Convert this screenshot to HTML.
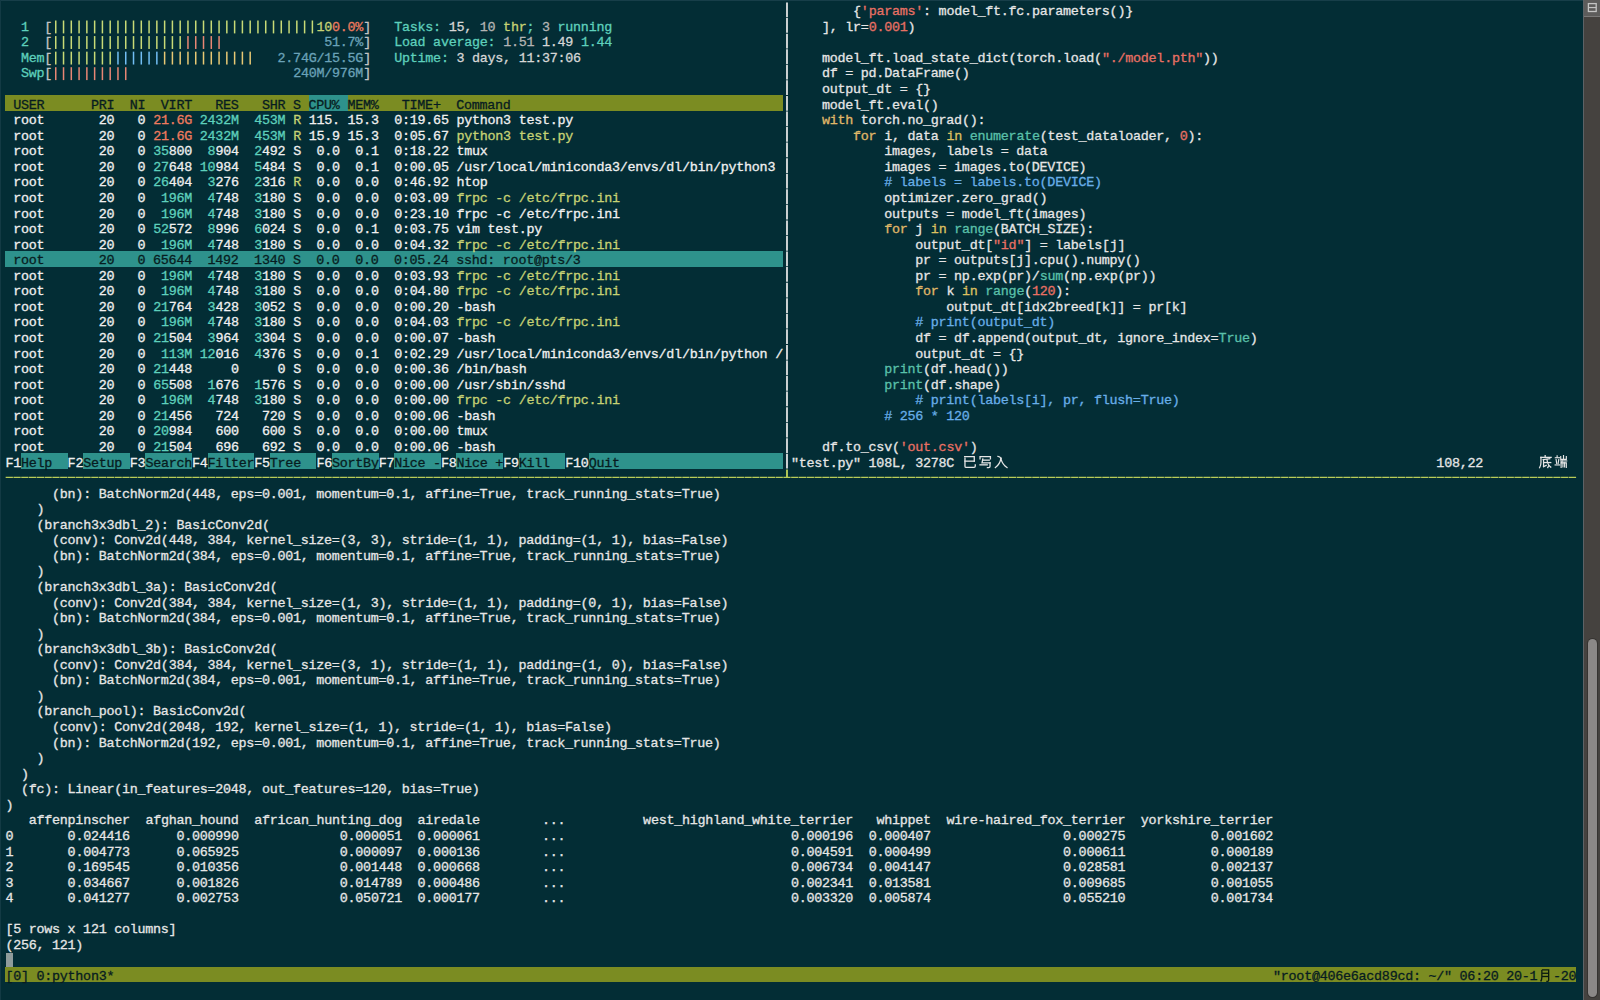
<!DOCTYPE html><html><head><meta charset="utf-8"><style>
html,body{margin:0;padding:0;width:1600px;height:1000px;overflow:hidden;background:#032d35;}
#t{position:absolute;left:0;top:0;width:1600px;height:1000px;}
.r{position:absolute;white-space:pre;font-family:"Liberation Mono",monospace;font-size:13.400px;line-height:15.562px;height:15.562px;-webkit-text-stroke:0.3px currentColor;letter-spacing:-0.263px;}
.b{position:absolute;}
</style></head><body><div id="t">
<div class="b" style="left:5.40px;top:95.42px;width:777.70px;height:15.56px;background:#7b8c22"></div>
<div class="b" style="left:308.70px;top:95.42px;width:38.88px;height:15.56px;background:#2e928c"></div>
<div class="b" style="left:5.40px;top:251.04px;width:777.70px;height:15.56px;background:#2e928c"></div>
<div class="b" style="left:20.95px;top:453.35px;width:46.66px;height:15.56px;background:#2e928c"></div>
<div class="b" style="left:83.17px;top:453.35px;width:46.66px;height:15.56px;background:#2e928c"></div>
<div class="b" style="left:145.39px;top:453.35px;width:46.66px;height:15.56px;background:#2e928c"></div>
<div class="b" style="left:207.60px;top:453.35px;width:46.66px;height:15.56px;background:#2e928c"></div>
<div class="b" style="left:269.82px;top:453.35px;width:46.66px;height:15.56px;background:#2e928c"></div>
<div class="b" style="left:332.03px;top:453.35px;width:46.66px;height:15.56px;background:#2e928c"></div>
<div class="b" style="left:394.25px;top:453.35px;width:46.66px;height:15.56px;background:#2e928c"></div>
<div class="b" style="left:456.47px;top:453.35px;width:46.66px;height:15.56px;background:#2e928c"></div>
<div class="b" style="left:518.68px;top:453.35px;width:46.66px;height:15.56px;background:#2e928c"></div>
<div class="b" style="left:588.67px;top:453.35px;width:194.43px;height:15.56px;background:#2e928c"></div>
<div class="b" style="left:5.40px;top:966.89px;width:1570.95px;height:15.56px;background:#7b8c22"></div>
<div class="b" style="left:5.60px;top:952.73px;width:7.58px;height:13.96px;background:#8f9c9c"></div>
<div class="b" style="left:0.00px;top:0.00px;width:1600.00px;height:1.00px;background:#173e49"></div>
<div class="b" style="left:0.00px;top:0.00px;width:1.00px;height:1000.00px;background:#133a44"></div>
<div class="b" style="left:1583.00px;top:0.00px;width:17.00px;height:1000.00px;background:#45423f"></div>
<div class="b" style="left:1583.00px;top:0.00px;width:1.00px;height:1000.00px;background:#5c6266"></div>
<div class="b" style="left:1584.00px;top:0.00px;width:16.00px;height:16.00px;background:#5d5c5b"></div>
<div class="b" style="left:1584.00px;top:15.50px;width:16.00px;height:1.00px;background:#7a7978"></div>
<div class="r" style="left:20.95px;top:19.77px;color:#5ed0bc">1</div>
<div class="r" style="left:44.28px;top:19.77px;color:#c4c4c4">[</div>
<div class="r" style="left:316.48px;top:19.77px;color:#c6d274">10</div>
<div class="r" style="left:332.03px;top:19.77px;color:#ee7a5e">0.0%</div>
<div class="r" style="left:363.14px;top:19.77px;color:#c4c4c4">]</div>
<div class="r" style="left:20.95px;top:35.33px;color:#5ed0bc">2</div>
<div class="r" style="left:44.28px;top:35.33px;color:#c4c4c4">[</div>
<div class="r" style="left:324.26px;top:35.33px;color:#6aa2b8">51.7%</div>
<div class="r" style="left:363.14px;top:35.33px;color:#c4c4c4">]</div>
<div class="r" style="left:20.95px;top:50.89px;color:#5ed0bc">Mem</div>
<div class="r" style="left:44.28px;top:50.89px;color:#c4c4c4">[</div>
<div class="r" style="left:277.59px;top:50.89px;color:#6aa2b8">2.74G/15.5G</div>
<div class="r" style="left:363.14px;top:50.89px;color:#c4c4c4">]</div>
<div class="r" style="left:20.95px;top:66.45px;color:#5ed0bc">Swp</div>
<div class="r" style="left:44.28px;top:66.45px;color:#c4c4c4">[</div>
<div class="r" style="left:293.15px;top:66.45px;color:#6aa2b8">240M/976M</div>
<div class="r" style="left:363.14px;top:66.45px;color:#c4c4c4">]</div>
<div class="r" style="left:394.25px;top:19.77px;color:#5ed0bc">Tasks: </div>
<div class="r" style="left:448.69px;top:19.77px;color:#d6d6d6">15, </div>
<div class="r" style="left:479.80px;top:19.77px;color:#b4b4b4">10</div>
<div class="r" style="left:495.35px;top:19.77px;color:#c6d274"> thr</div>
<div class="r" style="left:526.46px;top:19.77px;color:#5ed0bc">; </div>
<div class="r" style="left:542.01px;top:19.77px;color:#b4b4b4">3</div>
<div class="r" style="left:549.79px;top:19.77px;color:#5ed0bc"> running</div>
<div class="r" style="left:394.25px;top:35.33px;color:#5ed0bc">Load average: </div>
<div class="r" style="left:503.13px;top:35.33px;color:#b4b4b4">1.51 </div>
<div class="r" style="left:542.01px;top:35.33px;color:#d6d6d6">1.49 </div>
<div class="r" style="left:580.90px;top:35.33px;color:#5ed0bc">1.44</div>
<div class="r" style="left:394.25px;top:50.89px;color:#5ed0bc">Uptime: </div>
<div class="r" style="left:456.47px;top:50.89px;color:#d6d6d6">3 days, 11:37:06</div>
<div class="r" style="left:5.40px;top:97.58px;color:#071c20"> USER      PRI  NI  VIRT   RES   SHR S CPU% MEM%   TIME+  Command</div>
<div class="r" style="left:13.18px;top:113.14px;color:#f0f0f0">root</div>
<div class="r" style="left:98.72px;top:113.14px;color:#f0f0f0">20</div>
<div class="r" style="left:137.61px;top:113.14px;color:#f0f0f0">0</div>
<div class="r" style="left:153.16px;top:113.14px;color:#ee7a5e">21.6G</div>
<div class="r" style="left:199.83px;top:113.14px;color:#5ed0bc">2432M</div>
<div class="r" style="left:254.26px;top:113.14px;color:#5ed0bc">453M</div>
<div class="r" style="left:293.15px;top:113.14px;color:#c6d274">R</div>
<div class="r" style="left:308.70px;top:113.14px;color:#f0f0f0">115.</div>
<div class="r" style="left:347.59px;top:113.14px;color:#f0f0f0">15.3</div>
<div class="r" style="left:394.25px;top:113.14px;color:#f0f0f0">0:19.65</div>
<div class="r" style="left:456.47px;top:113.14px;color:#f0f0f0">python3 test.py</div>
<div class="r" style="left:13.18px;top:128.70px;color:#f0f0f0">root</div>
<div class="r" style="left:98.72px;top:128.70px;color:#f0f0f0">20</div>
<div class="r" style="left:137.61px;top:128.70px;color:#f0f0f0">0</div>
<div class="r" style="left:153.16px;top:128.70px;color:#ee7a5e">21.6G</div>
<div class="r" style="left:199.83px;top:128.70px;color:#5ed0bc">2432M</div>
<div class="r" style="left:254.26px;top:128.70px;color:#5ed0bc">453M</div>
<div class="r" style="left:293.15px;top:128.70px;color:#c6d274">R</div>
<div class="r" style="left:308.70px;top:128.70px;color:#f0f0f0">15.9</div>
<div class="r" style="left:347.59px;top:128.70px;color:#f0f0f0">15.3</div>
<div class="r" style="left:394.25px;top:128.70px;color:#f0f0f0">0:05.67</div>
<div class="r" style="left:456.47px;top:128.70px;color:#c6d274">python3 test.py</div>
<div class="r" style="left:13.18px;top:144.26px;color:#f0f0f0">root</div>
<div class="r" style="left:98.72px;top:144.26px;color:#f0f0f0">20</div>
<div class="r" style="left:137.61px;top:144.26px;color:#f0f0f0">0</div>
<div class="r" style="left:153.16px;top:144.26px;color:#5ed0bc">35</div>
<div class="r" style="left:168.72px;top:144.26px;color:#f0f0f0">800</div>
<div class="r" style="left:207.60px;top:144.26px;color:#5ed0bc">8</div>
<div class="r" style="left:215.38px;top:144.26px;color:#f0f0f0">904</div>
<div class="r" style="left:254.26px;top:144.26px;color:#5ed0bc">2</div>
<div class="r" style="left:262.04px;top:144.26px;color:#f0f0f0">492</div>
<div class="r" style="left:293.15px;top:144.26px;color:#f0f0f0">S</div>
<div class="r" style="left:316.48px;top:144.26px;color:#f0f0f0">0.0</div>
<div class="r" style="left:355.37px;top:144.26px;color:#f0f0f0">0.1</div>
<div class="r" style="left:394.25px;top:144.26px;color:#f0f0f0">0:18.22</div>
<div class="r" style="left:456.47px;top:144.26px;color:#f0f0f0">tmux</div>
<div class="r" style="left:13.18px;top:159.82px;color:#f0f0f0">root</div>
<div class="r" style="left:98.72px;top:159.82px;color:#f0f0f0">20</div>
<div class="r" style="left:137.61px;top:159.82px;color:#f0f0f0">0</div>
<div class="r" style="left:153.16px;top:159.82px;color:#5ed0bc">27</div>
<div class="r" style="left:168.72px;top:159.82px;color:#f0f0f0">648</div>
<div class="r" style="left:199.83px;top:159.82px;color:#5ed0bc">10</div>
<div class="r" style="left:215.38px;top:159.82px;color:#f0f0f0">984</div>
<div class="r" style="left:254.26px;top:159.82px;color:#5ed0bc">5</div>
<div class="r" style="left:262.04px;top:159.82px;color:#f0f0f0">484</div>
<div class="r" style="left:293.15px;top:159.82px;color:#f0f0f0">S</div>
<div class="r" style="left:316.48px;top:159.82px;color:#f0f0f0">0.0</div>
<div class="r" style="left:355.37px;top:159.82px;color:#f0f0f0">0.1</div>
<div class="r" style="left:394.25px;top:159.82px;color:#f0f0f0">0:00.05</div>
<div class="r" style="left:456.47px;top:159.82px;color:#f0f0f0">/usr/local/miniconda3/envs/dl/bin/python3</div>
<div class="r" style="left:13.18px;top:175.39px;color:#f0f0f0">root</div>
<div class="r" style="left:98.72px;top:175.39px;color:#f0f0f0">20</div>
<div class="r" style="left:137.61px;top:175.39px;color:#f0f0f0">0</div>
<div class="r" style="left:153.16px;top:175.39px;color:#5ed0bc">26</div>
<div class="r" style="left:168.72px;top:175.39px;color:#f0f0f0">404</div>
<div class="r" style="left:207.60px;top:175.39px;color:#5ed0bc">3</div>
<div class="r" style="left:215.38px;top:175.39px;color:#f0f0f0">276</div>
<div class="r" style="left:254.26px;top:175.39px;color:#5ed0bc">2</div>
<div class="r" style="left:262.04px;top:175.39px;color:#f0f0f0">316</div>
<div class="r" style="left:293.15px;top:175.39px;color:#c6d274">R</div>
<div class="r" style="left:316.48px;top:175.39px;color:#f0f0f0">0.0</div>
<div class="r" style="left:355.37px;top:175.39px;color:#f0f0f0">0.0</div>
<div class="r" style="left:394.25px;top:175.39px;color:#f0f0f0">0:46.92</div>
<div class="r" style="left:456.47px;top:175.39px;color:#f0f0f0">htop</div>
<div class="r" style="left:13.18px;top:190.95px;color:#f0f0f0">root</div>
<div class="r" style="left:98.72px;top:190.95px;color:#f0f0f0">20</div>
<div class="r" style="left:137.61px;top:190.95px;color:#f0f0f0">0</div>
<div class="r" style="left:160.94px;top:190.95px;color:#5ed0bc">196M</div>
<div class="r" style="left:207.60px;top:190.95px;color:#5ed0bc">4</div>
<div class="r" style="left:215.38px;top:190.95px;color:#f0f0f0">748</div>
<div class="r" style="left:254.26px;top:190.95px;color:#5ed0bc">3</div>
<div class="r" style="left:262.04px;top:190.95px;color:#f0f0f0">180</div>
<div class="r" style="left:293.15px;top:190.95px;color:#f0f0f0">S</div>
<div class="r" style="left:316.48px;top:190.95px;color:#f0f0f0">0.0</div>
<div class="r" style="left:355.37px;top:190.95px;color:#f0f0f0">0.0</div>
<div class="r" style="left:394.25px;top:190.95px;color:#f0f0f0">0:03.09</div>
<div class="r" style="left:456.47px;top:190.95px;color:#c6d274">frpc -c /etc/frpc.ini</div>
<div class="r" style="left:13.18px;top:206.51px;color:#f0f0f0">root</div>
<div class="r" style="left:98.72px;top:206.51px;color:#f0f0f0">20</div>
<div class="r" style="left:137.61px;top:206.51px;color:#f0f0f0">0</div>
<div class="r" style="left:160.94px;top:206.51px;color:#5ed0bc">196M</div>
<div class="r" style="left:207.60px;top:206.51px;color:#5ed0bc">4</div>
<div class="r" style="left:215.38px;top:206.51px;color:#f0f0f0">748</div>
<div class="r" style="left:254.26px;top:206.51px;color:#5ed0bc">3</div>
<div class="r" style="left:262.04px;top:206.51px;color:#f0f0f0">180</div>
<div class="r" style="left:293.15px;top:206.51px;color:#f0f0f0">S</div>
<div class="r" style="left:316.48px;top:206.51px;color:#f0f0f0">0.0</div>
<div class="r" style="left:355.37px;top:206.51px;color:#f0f0f0">0.0</div>
<div class="r" style="left:394.25px;top:206.51px;color:#f0f0f0">0:23.10</div>
<div class="r" style="left:456.47px;top:206.51px;color:#f0f0f0">frpc -c /etc/frpc.ini</div>
<div class="r" style="left:13.18px;top:222.07px;color:#f0f0f0">root</div>
<div class="r" style="left:98.72px;top:222.07px;color:#f0f0f0">20</div>
<div class="r" style="left:137.61px;top:222.07px;color:#f0f0f0">0</div>
<div class="r" style="left:153.16px;top:222.07px;color:#5ed0bc">52</div>
<div class="r" style="left:168.72px;top:222.07px;color:#f0f0f0">572</div>
<div class="r" style="left:207.60px;top:222.07px;color:#5ed0bc">8</div>
<div class="r" style="left:215.38px;top:222.07px;color:#f0f0f0">996</div>
<div class="r" style="left:254.26px;top:222.07px;color:#5ed0bc">6</div>
<div class="r" style="left:262.04px;top:222.07px;color:#f0f0f0">024</div>
<div class="r" style="left:293.15px;top:222.07px;color:#f0f0f0">S</div>
<div class="r" style="left:316.48px;top:222.07px;color:#f0f0f0">0.0</div>
<div class="r" style="left:355.37px;top:222.07px;color:#f0f0f0">0.1</div>
<div class="r" style="left:394.25px;top:222.07px;color:#f0f0f0">0:03.75</div>
<div class="r" style="left:456.47px;top:222.07px;color:#f0f0f0">vim test.py</div>
<div class="r" style="left:13.18px;top:237.63px;color:#f0f0f0">root</div>
<div class="r" style="left:98.72px;top:237.63px;color:#f0f0f0">20</div>
<div class="r" style="left:137.61px;top:237.63px;color:#f0f0f0">0</div>
<div class="r" style="left:160.94px;top:237.63px;color:#5ed0bc">196M</div>
<div class="r" style="left:207.60px;top:237.63px;color:#5ed0bc">4</div>
<div class="r" style="left:215.38px;top:237.63px;color:#f0f0f0">748</div>
<div class="r" style="left:254.26px;top:237.63px;color:#5ed0bc">3</div>
<div class="r" style="left:262.04px;top:237.63px;color:#f0f0f0">180</div>
<div class="r" style="left:293.15px;top:237.63px;color:#f0f0f0">S</div>
<div class="r" style="left:316.48px;top:237.63px;color:#f0f0f0">0.0</div>
<div class="r" style="left:355.37px;top:237.63px;color:#f0f0f0">0.0</div>
<div class="r" style="left:394.25px;top:237.63px;color:#f0f0f0">0:04.32</div>
<div class="r" style="left:456.47px;top:237.63px;color:#c6d274">frpc -c /etc/frpc.ini</div>
<div class="r" style="left:5.40px;top:253.20px;color:#071c20"> root       20   0 65644  1492  1340 S  0.0  0.0  0:05.24 sshd: root@pts/3</div>
<div class="r" style="left:13.18px;top:268.76px;color:#f0f0f0">root</div>
<div class="r" style="left:98.72px;top:268.76px;color:#f0f0f0">20</div>
<div class="r" style="left:137.61px;top:268.76px;color:#f0f0f0">0</div>
<div class="r" style="left:160.94px;top:268.76px;color:#5ed0bc">196M</div>
<div class="r" style="left:207.60px;top:268.76px;color:#5ed0bc">4</div>
<div class="r" style="left:215.38px;top:268.76px;color:#f0f0f0">748</div>
<div class="r" style="left:254.26px;top:268.76px;color:#5ed0bc">3</div>
<div class="r" style="left:262.04px;top:268.76px;color:#f0f0f0">180</div>
<div class="r" style="left:293.15px;top:268.76px;color:#f0f0f0">S</div>
<div class="r" style="left:316.48px;top:268.76px;color:#f0f0f0">0.0</div>
<div class="r" style="left:355.37px;top:268.76px;color:#f0f0f0">0.0</div>
<div class="r" style="left:394.25px;top:268.76px;color:#f0f0f0">0:03.93</div>
<div class="r" style="left:456.47px;top:268.76px;color:#c6d274">frpc -c /etc/frpc.ini</div>
<div class="r" style="left:13.18px;top:284.32px;color:#f0f0f0">root</div>
<div class="r" style="left:98.72px;top:284.32px;color:#f0f0f0">20</div>
<div class="r" style="left:137.61px;top:284.32px;color:#f0f0f0">0</div>
<div class="r" style="left:160.94px;top:284.32px;color:#5ed0bc">196M</div>
<div class="r" style="left:207.60px;top:284.32px;color:#5ed0bc">4</div>
<div class="r" style="left:215.38px;top:284.32px;color:#f0f0f0">748</div>
<div class="r" style="left:254.26px;top:284.32px;color:#5ed0bc">3</div>
<div class="r" style="left:262.04px;top:284.32px;color:#f0f0f0">180</div>
<div class="r" style="left:293.15px;top:284.32px;color:#f0f0f0">S</div>
<div class="r" style="left:316.48px;top:284.32px;color:#f0f0f0">0.0</div>
<div class="r" style="left:355.37px;top:284.32px;color:#f0f0f0">0.0</div>
<div class="r" style="left:394.25px;top:284.32px;color:#f0f0f0">0:04.80</div>
<div class="r" style="left:456.47px;top:284.32px;color:#c6d274">frpc -c /etc/frpc.ini</div>
<div class="r" style="left:13.18px;top:299.88px;color:#f0f0f0">root</div>
<div class="r" style="left:98.72px;top:299.88px;color:#f0f0f0">20</div>
<div class="r" style="left:137.61px;top:299.88px;color:#f0f0f0">0</div>
<div class="r" style="left:153.16px;top:299.88px;color:#5ed0bc">21</div>
<div class="r" style="left:168.72px;top:299.88px;color:#f0f0f0">764</div>
<div class="r" style="left:207.60px;top:299.88px;color:#5ed0bc">3</div>
<div class="r" style="left:215.38px;top:299.88px;color:#f0f0f0">428</div>
<div class="r" style="left:254.26px;top:299.88px;color:#5ed0bc">3</div>
<div class="r" style="left:262.04px;top:299.88px;color:#f0f0f0">052</div>
<div class="r" style="left:293.15px;top:299.88px;color:#f0f0f0">S</div>
<div class="r" style="left:316.48px;top:299.88px;color:#f0f0f0">0.0</div>
<div class="r" style="left:355.37px;top:299.88px;color:#f0f0f0">0.0</div>
<div class="r" style="left:394.25px;top:299.88px;color:#f0f0f0">0:00.20</div>
<div class="r" style="left:456.47px;top:299.88px;color:#f0f0f0">-bash</div>
<div class="r" style="left:13.18px;top:315.44px;color:#f0f0f0">root</div>
<div class="r" style="left:98.72px;top:315.44px;color:#f0f0f0">20</div>
<div class="r" style="left:137.61px;top:315.44px;color:#f0f0f0">0</div>
<div class="r" style="left:160.94px;top:315.44px;color:#5ed0bc">196M</div>
<div class="r" style="left:207.60px;top:315.44px;color:#5ed0bc">4</div>
<div class="r" style="left:215.38px;top:315.44px;color:#f0f0f0">748</div>
<div class="r" style="left:254.26px;top:315.44px;color:#5ed0bc">3</div>
<div class="r" style="left:262.04px;top:315.44px;color:#f0f0f0">180</div>
<div class="r" style="left:293.15px;top:315.44px;color:#f0f0f0">S</div>
<div class="r" style="left:316.48px;top:315.44px;color:#f0f0f0">0.0</div>
<div class="r" style="left:355.37px;top:315.44px;color:#f0f0f0">0.0</div>
<div class="r" style="left:394.25px;top:315.44px;color:#f0f0f0">0:04.03</div>
<div class="r" style="left:456.47px;top:315.44px;color:#c6d274">frpc -c /etc/frpc.ini</div>
<div class="r" style="left:13.18px;top:331.01px;color:#f0f0f0">root</div>
<div class="r" style="left:98.72px;top:331.01px;color:#f0f0f0">20</div>
<div class="r" style="left:137.61px;top:331.01px;color:#f0f0f0">0</div>
<div class="r" style="left:153.16px;top:331.01px;color:#5ed0bc">21</div>
<div class="r" style="left:168.72px;top:331.01px;color:#f0f0f0">504</div>
<div class="r" style="left:207.60px;top:331.01px;color:#5ed0bc">3</div>
<div class="r" style="left:215.38px;top:331.01px;color:#f0f0f0">964</div>
<div class="r" style="left:254.26px;top:331.01px;color:#5ed0bc">3</div>
<div class="r" style="left:262.04px;top:331.01px;color:#f0f0f0">304</div>
<div class="r" style="left:293.15px;top:331.01px;color:#f0f0f0">S</div>
<div class="r" style="left:316.48px;top:331.01px;color:#f0f0f0">0.0</div>
<div class="r" style="left:355.37px;top:331.01px;color:#f0f0f0">0.0</div>
<div class="r" style="left:394.25px;top:331.01px;color:#f0f0f0">0:00.07</div>
<div class="r" style="left:456.47px;top:331.01px;color:#f0f0f0">-bash</div>
<div class="r" style="left:13.18px;top:346.57px;color:#f0f0f0">root</div>
<div class="r" style="left:98.72px;top:346.57px;color:#f0f0f0">20</div>
<div class="r" style="left:137.61px;top:346.57px;color:#f0f0f0">0</div>
<div class="r" style="left:160.94px;top:346.57px;color:#5ed0bc">113M</div>
<div class="r" style="left:199.83px;top:346.57px;color:#5ed0bc">12</div>
<div class="r" style="left:215.38px;top:346.57px;color:#f0f0f0">016</div>
<div class="r" style="left:254.26px;top:346.57px;color:#5ed0bc">4</div>
<div class="r" style="left:262.04px;top:346.57px;color:#f0f0f0">376</div>
<div class="r" style="left:293.15px;top:346.57px;color:#f0f0f0">S</div>
<div class="r" style="left:316.48px;top:346.57px;color:#f0f0f0">0.0</div>
<div class="r" style="left:355.37px;top:346.57px;color:#f0f0f0">0.1</div>
<div class="r" style="left:394.25px;top:346.57px;color:#f0f0f0">0:02.29</div>
<div class="r" style="left:456.47px;top:346.57px;color:#f0f0f0">/usr/local/miniconda3/envs/dl/bin/python /</div>
<div class="r" style="left:13.18px;top:362.13px;color:#f0f0f0">root</div>
<div class="r" style="left:98.72px;top:362.13px;color:#f0f0f0">20</div>
<div class="r" style="left:137.61px;top:362.13px;color:#f0f0f0">0</div>
<div class="r" style="left:153.16px;top:362.13px;color:#5ed0bc">21</div>
<div class="r" style="left:168.72px;top:362.13px;color:#f0f0f0">448</div>
<div class="r" style="left:230.93px;top:362.13px;color:#f0f0f0">0</div>
<div class="r" style="left:277.59px;top:362.13px;color:#f0f0f0">0</div>
<div class="r" style="left:293.15px;top:362.13px;color:#f0f0f0">S</div>
<div class="r" style="left:316.48px;top:362.13px;color:#f0f0f0">0.0</div>
<div class="r" style="left:355.37px;top:362.13px;color:#f0f0f0">0.0</div>
<div class="r" style="left:394.25px;top:362.13px;color:#f0f0f0">0:00.36</div>
<div class="r" style="left:456.47px;top:362.13px;color:#f0f0f0">/bin/bash</div>
<div class="r" style="left:13.18px;top:377.69px;color:#f0f0f0">root</div>
<div class="r" style="left:98.72px;top:377.69px;color:#f0f0f0">20</div>
<div class="r" style="left:137.61px;top:377.69px;color:#f0f0f0">0</div>
<div class="r" style="left:153.16px;top:377.69px;color:#5ed0bc">65</div>
<div class="r" style="left:168.72px;top:377.69px;color:#f0f0f0">508</div>
<div class="r" style="left:207.60px;top:377.69px;color:#5ed0bc">1</div>
<div class="r" style="left:215.38px;top:377.69px;color:#f0f0f0">676</div>
<div class="r" style="left:254.26px;top:377.69px;color:#5ed0bc">1</div>
<div class="r" style="left:262.04px;top:377.69px;color:#f0f0f0">576</div>
<div class="r" style="left:293.15px;top:377.69px;color:#f0f0f0">S</div>
<div class="r" style="left:316.48px;top:377.69px;color:#f0f0f0">0.0</div>
<div class="r" style="left:355.37px;top:377.69px;color:#f0f0f0">0.0</div>
<div class="r" style="left:394.25px;top:377.69px;color:#f0f0f0">0:00.00</div>
<div class="r" style="left:456.47px;top:377.69px;color:#f0f0f0">/usr/sbin/sshd</div>
<div class="r" style="left:13.18px;top:393.25px;color:#f0f0f0">root</div>
<div class="r" style="left:98.72px;top:393.25px;color:#f0f0f0">20</div>
<div class="r" style="left:137.61px;top:393.25px;color:#f0f0f0">0</div>
<div class="r" style="left:160.94px;top:393.25px;color:#5ed0bc">196M</div>
<div class="r" style="left:207.60px;top:393.25px;color:#5ed0bc">4</div>
<div class="r" style="left:215.38px;top:393.25px;color:#f0f0f0">748</div>
<div class="r" style="left:254.26px;top:393.25px;color:#5ed0bc">3</div>
<div class="r" style="left:262.04px;top:393.25px;color:#f0f0f0">180</div>
<div class="r" style="left:293.15px;top:393.25px;color:#f0f0f0">S</div>
<div class="r" style="left:316.48px;top:393.25px;color:#f0f0f0">0.0</div>
<div class="r" style="left:355.37px;top:393.25px;color:#f0f0f0">0.0</div>
<div class="r" style="left:394.25px;top:393.25px;color:#f0f0f0">0:00.00</div>
<div class="r" style="left:456.47px;top:393.25px;color:#c6d274">frpc -c /etc/frpc.ini</div>
<div class="r" style="left:13.18px;top:408.82px;color:#f0f0f0">root</div>
<div class="r" style="left:98.72px;top:408.82px;color:#f0f0f0">20</div>
<div class="r" style="left:137.61px;top:408.82px;color:#f0f0f0">0</div>
<div class="r" style="left:153.16px;top:408.82px;color:#5ed0bc">21</div>
<div class="r" style="left:168.72px;top:408.82px;color:#f0f0f0">456</div>
<div class="r" style="left:215.38px;top:408.82px;color:#f0f0f0">724</div>
<div class="r" style="left:262.04px;top:408.82px;color:#f0f0f0">720</div>
<div class="r" style="left:293.15px;top:408.82px;color:#f0f0f0">S</div>
<div class="r" style="left:316.48px;top:408.82px;color:#f0f0f0">0.0</div>
<div class="r" style="left:355.37px;top:408.82px;color:#f0f0f0">0.0</div>
<div class="r" style="left:394.25px;top:408.82px;color:#f0f0f0">0:00.06</div>
<div class="r" style="left:456.47px;top:408.82px;color:#f0f0f0">-bash</div>
<div class="r" style="left:13.18px;top:424.38px;color:#f0f0f0">root</div>
<div class="r" style="left:98.72px;top:424.38px;color:#f0f0f0">20</div>
<div class="r" style="left:137.61px;top:424.38px;color:#f0f0f0">0</div>
<div class="r" style="left:153.16px;top:424.38px;color:#5ed0bc">20</div>
<div class="r" style="left:168.72px;top:424.38px;color:#f0f0f0">984</div>
<div class="r" style="left:215.38px;top:424.38px;color:#f0f0f0">600</div>
<div class="r" style="left:262.04px;top:424.38px;color:#f0f0f0">600</div>
<div class="r" style="left:293.15px;top:424.38px;color:#f0f0f0">S</div>
<div class="r" style="left:316.48px;top:424.38px;color:#f0f0f0">0.0</div>
<div class="r" style="left:355.37px;top:424.38px;color:#f0f0f0">0.0</div>
<div class="r" style="left:394.25px;top:424.38px;color:#f0f0f0">0:00.00</div>
<div class="r" style="left:456.47px;top:424.38px;color:#f0f0f0">tmux</div>
<div class="r" style="left:13.18px;top:439.94px;color:#f0f0f0">root</div>
<div class="r" style="left:98.72px;top:439.94px;color:#f0f0f0">20</div>
<div class="r" style="left:137.61px;top:439.94px;color:#f0f0f0">0</div>
<div class="r" style="left:153.16px;top:439.94px;color:#5ed0bc">21</div>
<div class="r" style="left:168.72px;top:439.94px;color:#f0f0f0">504</div>
<div class="r" style="left:215.38px;top:439.94px;color:#f0f0f0">696</div>
<div class="r" style="left:262.04px;top:439.94px;color:#f0f0f0">692</div>
<div class="r" style="left:293.15px;top:439.94px;color:#f0f0f0">S</div>
<div class="r" style="left:316.48px;top:439.94px;color:#f0f0f0">0.0</div>
<div class="r" style="left:355.37px;top:439.94px;color:#f0f0f0">0.0</div>
<div class="r" style="left:394.25px;top:439.94px;color:#f0f0f0">0:00.06</div>
<div class="r" style="left:456.47px;top:439.94px;color:#f0f0f0">-bash</div>
<div class="r" style="left:5.40px;top:455.50px;color:#f0f0f0">F1</div>
<div class="r" style="left:20.95px;top:455.50px;color:#071c20">Help  </div>
<div class="r" style="left:67.62px;top:455.50px;color:#f0f0f0">F2</div>
<div class="r" style="left:83.17px;top:455.50px;color:#071c20">Setup </div>
<div class="r" style="left:129.83px;top:455.50px;color:#f0f0f0">F3</div>
<div class="r" style="left:145.39px;top:455.50px;color:#071c20">Search</div>
<div class="r" style="left:192.05px;top:455.50px;color:#f0f0f0">F4</div>
<div class="r" style="left:207.60px;top:455.50px;color:#071c20">Filter</div>
<div class="r" style="left:254.26px;top:455.50px;color:#f0f0f0">F5</div>
<div class="r" style="left:269.82px;top:455.50px;color:#071c20">Tree  </div>
<div class="r" style="left:316.48px;top:455.50px;color:#f0f0f0">F6</div>
<div class="r" style="left:332.03px;top:455.50px;color:#071c20">SortBy</div>
<div class="r" style="left:378.70px;top:455.50px;color:#f0f0f0">F7</div>
<div class="r" style="left:394.25px;top:455.50px;color:#071c20">Nice -</div>
<div class="r" style="left:440.91px;top:455.50px;color:#f0f0f0">F8</div>
<div class="r" style="left:456.47px;top:455.50px;color:#071c20">Nice +</div>
<div class="r" style="left:503.13px;top:455.50px;color:#f0f0f0">F9</div>
<div class="r" style="left:518.68px;top:455.50px;color:#071c20">Kill  </div>
<div class="r" style="left:565.34px;top:455.50px;color:#f0f0f0">F10</div>
<div class="r" style="left:588.67px;top:455.50px;color:#071c20">Quit</div>
<div class="r" style="left:790.88px;top:4.20px;color:#e6e6e6">        {</div>
<div class="r" style="left:860.87px;top:4.20px;color:#e87064">'params'</div>
<div class="r" style="left:923.09px;top:4.20px;color:#e6e6e6">: model_ft.fc.parameters()}</div>
<div class="r" style="left:790.88px;top:19.77px;color:#e6e6e6">    ], lr=</div>
<div class="r" style="left:868.65px;top:19.77px;color:#e87064">0.001</div>
<div class="r" style="left:907.53px;top:19.77px;color:#e6e6e6">)</div>
<div class="r" style="left:790.88px;top:50.89px;color:#e6e6e6">    model_ft.load_state_dict(torch.load(</div>
<div class="r" style="left:1101.96px;top:50.89px;color:#e87064">"./model.pth"</div>
<div class="r" style="left:1203.06px;top:50.89px;color:#e6e6e6">))</div>
<div class="r" style="left:790.88px;top:66.45px;color:#e6e6e6">    df = pd.DataFrame()</div>
<div class="r" style="left:790.88px;top:82.01px;color:#e6e6e6">    output_dt = {}</div>
<div class="r" style="left:790.88px;top:97.58px;color:#e6e6e6">    model_ft.eval()</div>
<div class="r" style="left:821.99px;top:113.14px;color:#e0b868">with</div>
<div class="r" style="left:853.09px;top:113.14px;color:#e6e6e6"> torch.no_grad():</div>
<div class="r" style="left:853.09px;top:128.70px;color:#e0b868">for</div>
<div class="r" style="left:876.42px;top:128.70px;color:#e6e6e6"> i, data </div>
<div class="r" style="left:946.42px;top:128.70px;color:#dcc060">in</div>
<div class="r" style="left:969.75px;top:128.70px;color:#5ac0aa">enumerate</div>
<div class="r" style="left:1039.74px;top:128.70px;color:#e6e6e6">(test_dataloader, </div>
<div class="r" style="left:1179.73px;top:128.70px;color:#e87064">0</div>
<div class="r" style="left:1187.50px;top:128.70px;color:#e6e6e6">):</div>
<div class="r" style="left:790.88px;top:144.26px;color:#e6e6e6">            images, labels = data</div>
<div class="r" style="left:790.88px;top:159.82px;color:#e6e6e6">            images = images.to(DEVICE)</div>
<div class="r" style="left:790.88px;top:175.39px;color:#68aee8">            # labels = labels.to(DEVICE)</div>
<div class="r" style="left:790.88px;top:190.95px;color:#e6e6e6">            optimizer.zero_grad()</div>
<div class="r" style="left:790.88px;top:206.51px;color:#e6e6e6">            outputs = model_ft(images)</div>
<div class="r" style="left:884.20px;top:222.07px;color:#e0b868">for</div>
<div class="r" style="left:907.53px;top:222.07px;color:#e6e6e6"> j </div>
<div class="r" style="left:930.86px;top:222.07px;color:#dcc060">in</div>
<div class="r" style="left:954.19px;top:222.07px;color:#5ac0aa">range</div>
<div class="r" style="left:993.08px;top:222.07px;color:#e6e6e6">(BATCH_SIZE):</div>
<div class="r" style="left:790.88px;top:237.63px;color:#e6e6e6">                output_dt[</div>
<div class="r" style="left:993.08px;top:237.63px;color:#e87064">"id"</div>
<div class="r" style="left:1024.19px;top:237.63px;color:#e6e6e6">] = labels[j]</div>
<div class="r" style="left:790.88px;top:253.20px;color:#e6e6e6">                pr = outputs[j].cpu().numpy()</div>
<div class="r" style="left:790.88px;top:268.76px;color:#e6e6e6">                pr = np.exp(pr)/</div>
<div class="r" style="left:1039.74px;top:268.76px;color:#5ac0aa">sum</div>
<div class="r" style="left:1063.07px;top:268.76px;color:#e6e6e6">(np.exp(pr))</div>
<div class="r" style="left:915.31px;top:284.32px;color:#e0b868">for</div>
<div class="r" style="left:938.64px;top:284.32px;color:#e6e6e6"> k </div>
<div class="r" style="left:961.97px;top:284.32px;color:#dcc060">in</div>
<div class="r" style="left:985.30px;top:284.32px;color:#5ac0aa">range</div>
<div class="r" style="left:1024.19px;top:284.32px;color:#e6e6e6">(</div>
<div class="r" style="left:1031.96px;top:284.32px;color:#e87064">120</div>
<div class="r" style="left:1055.30px;top:284.32px;color:#e6e6e6">):</div>
<div class="r" style="left:790.88px;top:299.88px;color:#e6e6e6">                    output_dt[idx2breed[k]] = pr[k]</div>
<div class="r" style="left:790.88px;top:315.44px;color:#68aee8">                # print(output_dt)</div>
<div class="r" style="left:790.88px;top:331.01px;color:#e6e6e6">                df = df.append(output_dt, ignore_index=</div>
<div class="r" style="left:1218.61px;top:331.01px;color:#5ac0aa">True</div>
<div class="r" style="left:1249.72px;top:331.01px;color:#e6e6e6">)</div>
<div class="r" style="left:790.88px;top:346.57px;color:#e6e6e6">                output_dt = {}</div>
<div class="r" style="left:884.20px;top:362.13px;color:#5ac0aa">print</div>
<div class="r" style="left:923.09px;top:362.13px;color:#e6e6e6">(df.head())</div>
<div class="r" style="left:884.20px;top:377.69px;color:#5ac0aa">print</div>
<div class="r" style="left:923.09px;top:377.69px;color:#e6e6e6">(df.shape)</div>
<div class="r" style="left:790.88px;top:393.25px;color:#68aee8">                # print(labels[i], pr, flush=True)</div>
<div class="r" style="left:790.88px;top:408.82px;color:#68aee8">            # 256 * 120</div>
<div class="r" style="left:790.88px;top:439.94px;color:#e6e6e6">    df.to_csv(</div>
<div class="r" style="left:899.75px;top:439.94px;color:#e87064">'out.csv'</div>
<div class="r" style="left:969.75px;top:439.94px;color:#e6e6e6">)</div>
<div class="r" style="left:790.88px;top:455.50px;color:#e6e6e6">"test.py" 108L, 3278C </div>
<div class="r" style="left:1436.37px;top:455.50px;color:#e6e6e6">108,22</div>
<div class="r" style="left:52.06px;top:486.63px;color:#e6e6e6">(bn): BatchNorm2d(448, eps=0.001, momentum=0.1, affine=True, track_running_stats=True)</div>
<div class="r" style="left:36.51px;top:502.19px;color:#e6e6e6">)</div>
<div class="r" style="left:36.51px;top:517.75px;color:#e6e6e6">(branch3x3dbl_2): BasicConv2d(</div>
<div class="r" style="left:52.06px;top:533.31px;color:#e6e6e6">(conv): Conv2d(448, 384, kernel_size=(3, 3), stride=(1, 1), padding=(1, 1), bias=False)</div>
<div class="r" style="left:52.06px;top:548.87px;color:#e6e6e6">(bn): BatchNorm2d(384, eps=0.001, momentum=0.1, affine=True, track_running_stats=True)</div>
<div class="r" style="left:36.51px;top:564.44px;color:#e6e6e6">)</div>
<div class="r" style="left:36.51px;top:580.00px;color:#e6e6e6">(branch3x3dbl_3a): BasicConv2d(</div>
<div class="r" style="left:52.06px;top:595.56px;color:#e6e6e6">(conv): Conv2d(384, 384, kernel_size=(1, 3), stride=(1, 1), padding=(0, 1), bias=False)</div>
<div class="r" style="left:52.06px;top:611.12px;color:#e6e6e6">(bn): BatchNorm2d(384, eps=0.001, momentum=0.1, affine=True, track_running_stats=True)</div>
<div class="r" style="left:36.51px;top:626.68px;color:#e6e6e6">)</div>
<div class="r" style="left:36.51px;top:642.25px;color:#e6e6e6">(branch3x3dbl_3b): BasicConv2d(</div>
<div class="r" style="left:52.06px;top:657.81px;color:#e6e6e6">(conv): Conv2d(384, 384, kernel_size=(3, 1), stride=(1, 1), padding=(1, 0), bias=False)</div>
<div class="r" style="left:52.06px;top:673.37px;color:#e6e6e6">(bn): BatchNorm2d(384, eps=0.001, momentum=0.1, affine=True, track_running_stats=True)</div>
<div class="r" style="left:36.51px;top:688.93px;color:#e6e6e6">)</div>
<div class="r" style="left:36.51px;top:704.49px;color:#e6e6e6">(branch_pool): BasicConv2d(</div>
<div class="r" style="left:52.06px;top:720.06px;color:#e6e6e6">(conv): Conv2d(2048, 192, kernel_size=(1, 1), stride=(1, 1), bias=False)</div>
<div class="r" style="left:52.06px;top:735.62px;color:#e6e6e6">(bn): BatchNorm2d(192, eps=0.001, momentum=0.1, affine=True, track_running_stats=True)</div>
<div class="r" style="left:36.51px;top:751.18px;color:#e6e6e6">)</div>
<div class="r" style="left:20.95px;top:766.74px;color:#e6e6e6">)</div>
<div class="r" style="left:20.95px;top:782.30px;color:#e6e6e6">(fc): Linear(in_features=2048, out_features=120, bias=True)</div>
<div class="r" style="left:5.40px;top:797.87px;color:#e6e6e6">)</div>
<div class="r" style="left:28.73px;top:813.43px;color:#e6e6e6">affenpinscher</div>
<div class="r" style="left:145.39px;top:813.43px;color:#e6e6e6">afghan_hound</div>
<div class="r" style="left:254.26px;top:813.43px;color:#e6e6e6">african_hunting_dog</div>
<div class="r" style="left:417.58px;top:813.43px;color:#e6e6e6">airedale</div>
<div class="r" style="left:542.01px;top:813.43px;color:#e6e6e6">...</div>
<div class="r" style="left:643.11px;top:813.43px;color:#e6e6e6">west_highland_white_terrier</div>
<div class="r" style="left:876.42px;top:813.43px;color:#e6e6e6">whippet</div>
<div class="r" style="left:946.42px;top:813.43px;color:#e6e6e6">wire-haired_fox_terrier</div>
<div class="r" style="left:1140.84px;top:813.43px;color:#e6e6e6">yorkshire_terrier</div>
<div class="r" style="left:5.40px;top:828.99px;color:#e6e6e6">0</div>
<div class="r" style="left:67.62px;top:828.99px;color:#e6e6e6">0.024416</div>
<div class="r" style="left:176.49px;top:828.99px;color:#e6e6e6">0.000990</div>
<div class="r" style="left:339.81px;top:828.99px;color:#e6e6e6">0.000051</div>
<div class="r" style="left:417.58px;top:828.99px;color:#e6e6e6">0.000061</div>
<div class="r" style="left:542.01px;top:828.99px;color:#e6e6e6">...</div>
<div class="r" style="left:790.88px;top:828.99px;color:#e6e6e6">0.000196</div>
<div class="r" style="left:868.65px;top:828.99px;color:#e6e6e6">0.000407</div>
<div class="r" style="left:1063.07px;top:828.99px;color:#e6e6e6">0.000275</div>
<div class="r" style="left:1210.84px;top:828.99px;color:#e6e6e6">0.001602</div>
<div class="r" style="left:5.40px;top:844.55px;color:#e6e6e6">1</div>
<div class="r" style="left:67.62px;top:844.55px;color:#e6e6e6">0.004773</div>
<div class="r" style="left:176.49px;top:844.55px;color:#e6e6e6">0.065925</div>
<div class="r" style="left:339.81px;top:844.55px;color:#e6e6e6">0.000097</div>
<div class="r" style="left:417.58px;top:844.55px;color:#e6e6e6">0.000136</div>
<div class="r" style="left:542.01px;top:844.55px;color:#e6e6e6">...</div>
<div class="r" style="left:790.88px;top:844.55px;color:#e6e6e6">0.004591</div>
<div class="r" style="left:868.65px;top:844.55px;color:#e6e6e6">0.000499</div>
<div class="r" style="left:1063.07px;top:844.55px;color:#e6e6e6">0.000611</div>
<div class="r" style="left:1210.84px;top:844.55px;color:#e6e6e6">0.000189</div>
<div class="r" style="left:5.40px;top:860.11px;color:#e6e6e6">2</div>
<div class="r" style="left:67.62px;top:860.11px;color:#e6e6e6">0.169545</div>
<div class="r" style="left:176.49px;top:860.11px;color:#e6e6e6">0.010356</div>
<div class="r" style="left:339.81px;top:860.11px;color:#e6e6e6">0.001448</div>
<div class="r" style="left:417.58px;top:860.11px;color:#e6e6e6">0.000668</div>
<div class="r" style="left:542.01px;top:860.11px;color:#e6e6e6">...</div>
<div class="r" style="left:790.88px;top:860.11px;color:#e6e6e6">0.006734</div>
<div class="r" style="left:868.65px;top:860.11px;color:#e6e6e6">0.004147</div>
<div class="r" style="left:1063.07px;top:860.11px;color:#e6e6e6">0.028581</div>
<div class="r" style="left:1210.84px;top:860.11px;color:#e6e6e6">0.002137</div>
<div class="r" style="left:5.40px;top:875.68px;color:#e6e6e6">3</div>
<div class="r" style="left:67.62px;top:875.68px;color:#e6e6e6">0.034667</div>
<div class="r" style="left:176.49px;top:875.68px;color:#e6e6e6">0.001826</div>
<div class="r" style="left:339.81px;top:875.68px;color:#e6e6e6">0.014789</div>
<div class="r" style="left:417.58px;top:875.68px;color:#e6e6e6">0.000486</div>
<div class="r" style="left:542.01px;top:875.68px;color:#e6e6e6">...</div>
<div class="r" style="left:790.88px;top:875.68px;color:#e6e6e6">0.002341</div>
<div class="r" style="left:868.65px;top:875.68px;color:#e6e6e6">0.013581</div>
<div class="r" style="left:1063.07px;top:875.68px;color:#e6e6e6">0.009685</div>
<div class="r" style="left:1210.84px;top:875.68px;color:#e6e6e6">0.001055</div>
<div class="r" style="left:5.40px;top:891.24px;color:#e6e6e6">4</div>
<div class="r" style="left:67.62px;top:891.24px;color:#e6e6e6">0.041277</div>
<div class="r" style="left:176.49px;top:891.24px;color:#e6e6e6">0.002753</div>
<div class="r" style="left:339.81px;top:891.24px;color:#e6e6e6">0.050721</div>
<div class="r" style="left:417.58px;top:891.24px;color:#e6e6e6">0.000177</div>
<div class="r" style="left:542.01px;top:891.24px;color:#e6e6e6">...</div>
<div class="r" style="left:790.88px;top:891.24px;color:#e6e6e6">0.003320</div>
<div class="r" style="left:868.65px;top:891.24px;color:#e6e6e6">0.005874</div>
<div class="r" style="left:1063.07px;top:891.24px;color:#e6e6e6">0.055210</div>
<div class="r" style="left:1210.84px;top:891.24px;color:#e6e6e6">0.001734</div>
<div class="r" style="left:5.40px;top:922.36px;color:#e6e6e6">[5 rows x 121 columns]</div>
<div class="r" style="left:5.40px;top:937.92px;color:#e6e6e6">(256, 121)</div>
<div class="r" style="left:5.40px;top:969.05px;color:#071c20">[0] 0:python3*</div>
<div class="r" style="left:1273.05px;top:969.05px;color:#071c20">"root@406e6acd89cd: ~/" 06:20 20-1</div>
<div class="r" style="left:1553.02px;top:969.05px;color:#071c20">-20</div>
<div class="b" style="left:1588px;top:638.5px;width:9px;height:358px;border-radius:4.5px;background:#8b8887;box-shadow:0 0 0 1px #353331"></div>
<svg style="position:absolute;left:0;top:0" width="1600" height="1000">
<rect x="55.00" y="20.51" width="1.50" height="12.90" fill="#c8da76"/>
<rect x="62.78" y="20.51" width="1.50" height="12.90" fill="#c8da76"/>
<rect x="70.55" y="20.51" width="1.50" height="12.90" fill="#c8da76"/>
<rect x="78.33" y="20.51" width="1.50" height="12.90" fill="#c8da76"/>
<rect x="86.11" y="20.51" width="1.50" height="12.90" fill="#c8da76"/>
<rect x="93.89" y="20.51" width="1.50" height="12.90" fill="#c8da76"/>
<rect x="101.66" y="20.51" width="1.50" height="12.90" fill="#c8da76"/>
<rect x="109.44" y="20.51" width="1.50" height="12.90" fill="#c8da76"/>
<rect x="117.22" y="20.51" width="1.50" height="12.90" fill="#c8da76"/>
<rect x="124.99" y="20.51" width="1.50" height="12.90" fill="#c8da76"/>
<rect x="132.77" y="20.51" width="1.50" height="12.90" fill="#c8da76"/>
<rect x="140.55" y="20.51" width="1.50" height="12.90" fill="#c8da76"/>
<rect x="148.32" y="20.51" width="1.50" height="12.90" fill="#c8da76"/>
<rect x="156.10" y="20.51" width="1.50" height="12.90" fill="#c8da76"/>
<rect x="163.88" y="20.51" width="1.50" height="12.90" fill="#c8da76"/>
<rect x="171.66" y="20.51" width="1.50" height="12.90" fill="#c8da76"/>
<rect x="179.43" y="20.51" width="1.50" height="12.90" fill="#c8da76"/>
<rect x="187.21" y="20.51" width="1.50" height="12.90" fill="#c8da76"/>
<rect x="194.99" y="20.51" width="1.50" height="12.90" fill="#c8da76"/>
<rect x="202.76" y="20.51" width="1.50" height="12.90" fill="#c8da76"/>
<rect x="210.54" y="20.51" width="1.50" height="12.90" fill="#c8da76"/>
<rect x="218.32" y="20.51" width="1.50" height="12.90" fill="#c8da76"/>
<rect x="226.09" y="20.51" width="1.50" height="12.90" fill="#c8da76"/>
<rect x="233.87" y="20.51" width="1.50" height="12.90" fill="#c8da76"/>
<rect x="241.65" y="20.51" width="1.50" height="12.90" fill="#c8da76"/>
<rect x="249.43" y="20.51" width="1.50" height="12.90" fill="#c8da76"/>
<rect x="257.20" y="20.51" width="1.50" height="12.90" fill="#c8da76"/>
<rect x="264.98" y="20.51" width="1.50" height="12.90" fill="#c8da76"/>
<rect x="272.76" y="20.51" width="1.50" height="12.90" fill="#c8da76"/>
<rect x="280.53" y="20.51" width="1.50" height="12.90" fill="#c8da76"/>
<rect x="288.31" y="20.51" width="1.50" height="12.90" fill="#c8da76"/>
<rect x="296.09" y="20.51" width="1.50" height="12.90" fill="#c8da76"/>
<rect x="303.86" y="20.51" width="1.50" height="12.90" fill="#c8da76"/>
<rect x="311.64" y="20.51" width="1.50" height="12.90" fill="#c8da76"/>
<rect x="55.00" y="36.07" width="1.50" height="12.90" fill="#c8da76"/>
<rect x="62.78" y="36.07" width="1.50" height="12.90" fill="#c8da76"/>
<rect x="70.55" y="36.07" width="1.50" height="12.90" fill="#c8da76"/>
<rect x="78.33" y="36.07" width="1.50" height="12.90" fill="#c8da76"/>
<rect x="86.11" y="36.07" width="1.50" height="12.90" fill="#c8da76"/>
<rect x="93.89" y="36.07" width="1.50" height="12.90" fill="#c8da76"/>
<rect x="101.66" y="36.07" width="1.50" height="12.90" fill="#c8da76"/>
<rect x="109.44" y="36.07" width="1.50" height="12.90" fill="#c8da76"/>
<rect x="117.22" y="36.07" width="1.50" height="12.90" fill="#c8da76"/>
<rect x="124.99" y="36.07" width="1.50" height="12.90" fill="#c8da76"/>
<rect x="132.77" y="36.07" width="1.50" height="12.90" fill="#c8da76"/>
<rect x="140.55" y="36.07" width="1.50" height="12.90" fill="#c8da76"/>
<rect x="148.32" y="36.07" width="1.50" height="12.90" fill="#c8da76"/>
<rect x="156.10" y="36.07" width="1.50" height="12.90" fill="#c8da76"/>
<rect x="163.88" y="36.07" width="1.50" height="12.90" fill="#c8da76"/>
<rect x="171.66" y="36.07" width="1.50" height="12.90" fill="#c8da76"/>
<rect x="179.43" y="36.07" width="1.50" height="12.90" fill="#c8da76"/>
<rect x="187.21" y="36.07" width="1.50" height="12.90" fill="#e88674"/>
<rect x="194.99" y="36.07" width="1.50" height="12.90" fill="#e88674"/>
<rect x="202.76" y="36.07" width="1.50" height="12.90" fill="#e88674"/>
<rect x="210.54" y="36.07" width="1.50" height="12.90" fill="#e88674"/>
<rect x="218.32" y="36.07" width="1.50" height="12.90" fill="#e88674"/>
<rect x="55.00" y="51.64" width="1.50" height="12.90" fill="#c8da76"/>
<rect x="62.78" y="51.64" width="1.50" height="12.90" fill="#c8da76"/>
<rect x="70.55" y="51.64" width="1.50" height="12.90" fill="#c8da76"/>
<rect x="78.33" y="51.64" width="1.50" height="12.90" fill="#c8da76"/>
<rect x="86.11" y="51.64" width="1.50" height="12.90" fill="#c8da76"/>
<rect x="93.89" y="51.64" width="1.50" height="12.90" fill="#c8da76"/>
<rect x="101.66" y="51.64" width="1.50" height="12.90" fill="#c8da76"/>
<rect x="109.44" y="51.64" width="1.50" height="12.90" fill="#c8da76"/>
<rect x="117.22" y="51.64" width="1.50" height="12.90" fill="#72bef4"/>
<rect x="124.99" y="51.64" width="1.50" height="12.90" fill="#72bef4"/>
<rect x="132.77" y="51.64" width="1.50" height="12.90" fill="#72bef4"/>
<rect x="140.55" y="51.64" width="1.50" height="12.90" fill="#72bef4"/>
<rect x="148.32" y="51.64" width="1.50" height="12.90" fill="#72bef4"/>
<rect x="156.10" y="51.64" width="1.50" height="12.90" fill="#72bef4"/>
<rect x="163.88" y="51.64" width="1.50" height="12.90" fill="#e8c874"/>
<rect x="171.66" y="51.64" width="1.50" height="12.90" fill="#e8c874"/>
<rect x="179.43" y="51.64" width="1.50" height="12.90" fill="#e8c874"/>
<rect x="187.21" y="51.64" width="1.50" height="12.90" fill="#e8c874"/>
<rect x="194.99" y="51.64" width="1.50" height="12.90" fill="#e8c874"/>
<rect x="202.76" y="51.64" width="1.50" height="12.90" fill="#e8c874"/>
<rect x="210.54" y="51.64" width="1.50" height="12.90" fill="#e8c874"/>
<rect x="218.32" y="51.64" width="1.50" height="12.90" fill="#e8c874"/>
<rect x="226.09" y="51.64" width="1.50" height="12.90" fill="#e8c874"/>
<rect x="233.87" y="51.64" width="1.50" height="12.90" fill="#e8c874"/>
<rect x="241.65" y="51.64" width="1.50" height="12.90" fill="#e8c874"/>
<rect x="249.43" y="51.64" width="1.50" height="12.90" fill="#e8c874"/>
<rect x="55.00" y="67.20" width="1.50" height="12.90" fill="#e88674"/>
<rect x="62.78" y="67.20" width="1.50" height="12.90" fill="#e88674"/>
<rect x="70.55" y="67.20" width="1.50" height="12.90" fill="#e88674"/>
<rect x="78.33" y="67.20" width="1.50" height="12.90" fill="#e88674"/>
<rect x="86.11" y="67.20" width="1.50" height="12.90" fill="#e88674"/>
<rect x="93.89" y="67.20" width="1.50" height="12.90" fill="#e88674"/>
<rect x="101.66" y="67.20" width="1.50" height="12.90" fill="#e88674"/>
<rect x="109.44" y="67.20" width="1.50" height="12.90" fill="#e88674"/>
<rect x="117.22" y="67.20" width="1.50" height="12.90" fill="#e88674"/>
<rect x="124.99" y="67.20" width="1.50" height="12.90" fill="#e88674"/>
<line x1="5.40" y1="477.25" x2="1576.35" y2="477.25" stroke="#b8cc58" stroke-width="1.25" stroke-dasharray="7.277 0.500" stroke-dashoffset="-0.250"/>
<line x1="786.99" y1="2.55" x2="786.99" y2="468.91" stroke="#d4d8d8" stroke-width="1.9" stroke-dasharray="14.762 0.800" stroke-dashoffset="0.000"/>
<line x1="786.99" y1="469.51" x2="786.99" y2="477.80" stroke="#b8cc58" stroke-width="1.9"/>
<rect x="1588.4" y="3.6" width="7.8" height="7.9" fill="none" stroke="#c4c4c4" stroke-width="1.3"/>
<line x1="1588.4" y1="7.55" x2="1596.2" y2="7.55" stroke="#c4c4c4" stroke-width="1.2"/>
<g transform="translate(963.67,455.55)" fill="none" stroke="#e6e6e6" stroke-width="1.30" stroke-linecap="square"><path d="M1,1 H10.6 V5.6"/><path d="M1.3,5.6 H10.6"/><path d="M1.3,2.6 V10.6 Q1.3,11.8 2.6,11.8 H10.4 Q11.6,11.8 11.6,10.4 V9.4"/></g>
<g transform="translate(979.23,455.55)" fill="none" stroke="#e6e6e6" stroke-width="1.30" stroke-linecap="square"><path d="M0.8,3.2 V1 H11.2 V3.2"/><path d="M3.6,3.4 L2.8,7.3 H10.8"/><path d="M3.4,4.6 H10"/><path d="M0.8,9.3 H8"/><path d="M10.8,7.3 V10.8 Q10.8,12 9.4,12 H8.2"/></g>
<g transform="translate(994.78,455.55)" fill="none" stroke="#e6e6e6" stroke-width="1.30" stroke-linecap="square"><path d="M3.2,0.8 Q5.2,0.8 6.2,3"/><path d="M6.2,2.4 Q5.4,8.6 0.6,12"/><path d="M6.2,3.6 Q8,9.4 12.2,12"/></g>
<g transform="translate(1539.17,455.55)" fill="none" stroke="#e6e6e6" stroke-width="1.25" stroke-linecap="square"><path d="M6,0 V1.4"/><path d="M1.6,1.8 H12"/><path d="M1.8,1.8 V7 Q1.8,10 0.4,12.2"/><path d="M4,4 L10.6,3.2"/><path d="M4.4,4 V11"/><path d="M4.4,7 H11.6"/><path d="M7.8,4 Q8.4,9.6 11.6,11.6"/><path d="M4.4,11 L7,9.8"/><path d="M9.6,10 L8.6,12"/></g>
<g transform="translate(1554.72,455.55)" fill="none" stroke="#e6e6e6" stroke-width="1.15" stroke-linecap="square"><path d="M2.4,0.4 V1.8"/><path d="M0.6,2.2 H4.8"/><path d="M1.4,4 L2,8"/><path d="M4,4 L3.4,8"/><path d="M0.4,9.4 H5"/><path d="M6,1 V3.8 H11.6 V1"/><path d="M8.8,0 V3.8"/><path d="M5.8,5.4 H12"/><path d="M7.4,5.4 L6.8,7"/><path d="M6.4,7.4 V12"/><path d="M6.4,7.4 H11.6 V12"/><path d="M8.2,7.4 V11.4"/><path d="M9.9,7.4 V11.4"/></g>
<g transform="translate(1540.67,968.89)" fill="none" stroke="#0a1a10" stroke-width="1.3"><path d="M1.2,1 V8 Q1.2,11 0,12.6"/><path d="M1.2,1 H8 V11.4 Q8,12.4 6.8,12.4 H5.6"/><path d="M1.4,4.4 H8"/><path d="M1.4,7.6 H8"/></g>
</svg>
</div></body></html>
